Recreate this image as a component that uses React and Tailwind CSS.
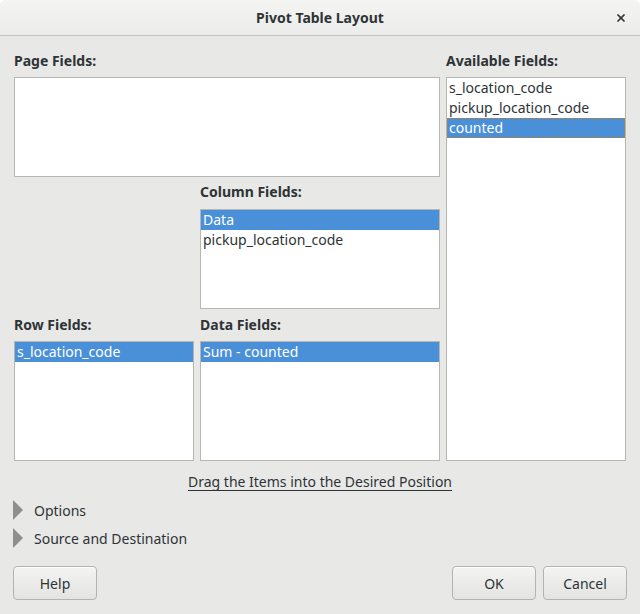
import { X } from "lucide-react";

// one row in a field list
function FieldItem({ label, selected, focused }) {
  return (
    <div
      className={`h-[20px] px-[2px] leading-[20px] text-[14px] whitespace-nowrap ${
        selected ? "bg-[#4a90d9] text-white" : "text-[#2e3436]"
      } ${focused ? "outline outline-1 outline-dashed outline-offset-[-1px] outline-[#c07a2c]" : ""}`}
    >
      {label}
    </div>
  );
}

function FieldBox({ items = [], className = "" }) {
  return (
    <div className={`bg-white border border-[#b6b6b3] overflow-hidden ${className}`}>
      {items.map((it) => (
        <FieldItem key={it.label} {...it} />
      ))}
    </div>
  );
}

function Label({ children, className = "" }) {
  return (
    <div className={`flex items-end font-bold text-[14px] leading-[20px] text-[#2e3436] ${className}`}>
      {children}
    </div>
  );
}

function Expander({ label }) {
  return (
    <div className="flex items-center h-[28px] gap-[11px] pl-[13px]">
      <svg width="10" height="20" viewBox="0 0 10 20">
        <polygon points="0,0 10,10 0,20" fill="#8d8f8f" />
      </svg>
      <span className="text-[14px] text-[#2e3436]">{label}</span>
    </div>
  );
}

function Button({ children }) {
  return (
    <button className="w-[84px] h-[34px] rounded-[4px] border border-[#b3b3b0] bg-gradient-to-b from-[#f4f4f3] to-[#e3e3e1] text-[14px] text-[#2e3436] shadow-[0_1px_0_rgba(255,255,255,0.8)_inset]">
      {children}
    </button>
  );
}

export default function App() {
  return (
    <div className="w-[640px] h-[614px] bg-white" style={{ fontFamily: '"Noto Sans", "DejaVu Sans", sans-serif' }}>
      <div className="flex flex-col w-full h-full rounded-t-[6px] overflow-hidden bg-[#e8e8e7]">
        {/* title bar */}
        <div className="relative flex items-center justify-center h-[36px] shrink-0 border-b border-[#c2c2bf] bg-gradient-to-b from-[#f4f4f3] to-[#ececeb]">
          <span className="font-bold text-[14px] text-[#2e3436]">Pivot Table Layout</span>
          <X className="absolute right-[13px] top-[12px] w-[12px] h-[12px] text-[#2e3436]" strokeWidth={3.5} />
        </div>

        {/* field areas */}
        <div className="grid grid-cols-[180px_240px_180px] grid-rows-[41px_100px_32px_100px_32px_120px] gap-x-[6px] px-[14px]">
          <Label className="col-span-2 pb-[6px]">Page Fields:</Label>
          <Label className="pb-[6px]">Available Fields:</Label>

          <FieldBox className="col-span-2" />
          <FieldBox
            className="row-span-5"
            items={[
              { label: "s_location_code" },
              { label: "pickup_location_code" },
              { label: "counted", selected: true, focused: true },
            ]}
          />

          <div />
          <Label className="pb-[7px]">Column Fields:</Label>

          <div />
          <FieldBox items={[{ label: "Data", selected: true }, { label: "pickup_location_code" }]} />

          <Label className="pb-[6px]">Row Fields:</Label>
          <Label className="pb-[6px]">Data Fields:</Label>

          <FieldBox items={[{ label: "s_location_code", selected: true }]} />
          <FieldBox items={[{ label: "Sum - counted", selected: true }]} />
        </div>

        <div className="flex justify-center pt-[11px] h-[35px]">
          <span className="text-[14px] leading-[20px] text-[#2e3436] underline underline-offset-[3px]">
            Drag the Items into the Desired Position
          </span>
        </div>

        <Expander label="Options" />
        <Expander label="Source and Destination" />

        <div className="flex items-center justify-between px-[13px] pt-[14px]">
          <Button>Help</Button>
          <div className="flex gap-[7px]">
            <Button>OK</Button>
            <Button>Cancel</Button>
          </div>
        </div>
      </div>
    </div>
  );
}
